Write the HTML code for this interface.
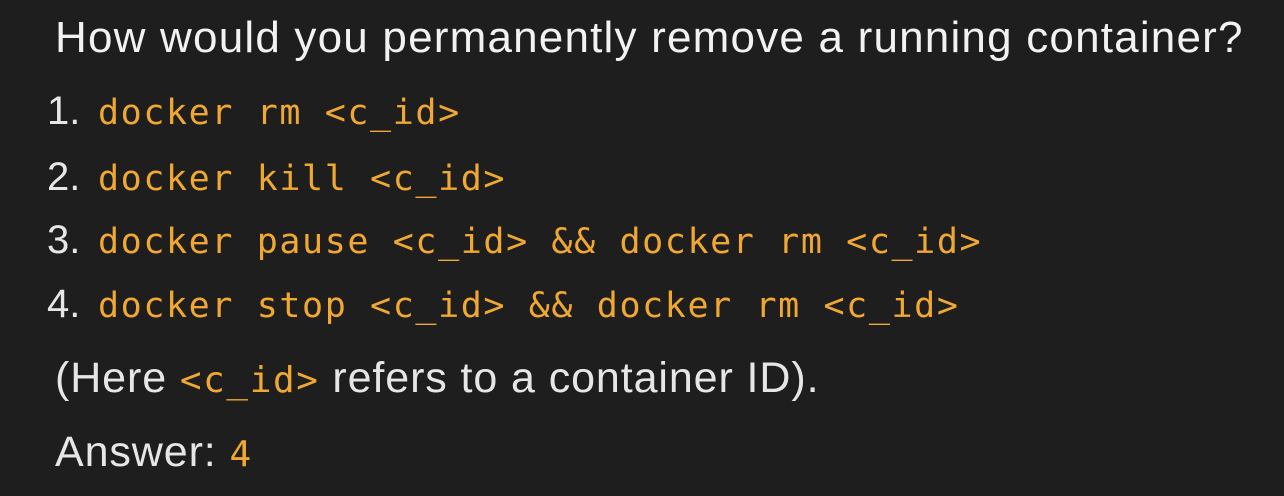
<!DOCTYPE html>
<html><head><style>
html,body{margin:0;padding:0;background:#1e1e1e;width:1284px;height:496px;overflow:hidden}
body{font-family:"Liberation Sans",sans-serif;color:#e6e6e6;position:relative}
.l{position:absolute;white-space:nowrap;line-height:1}
code{font-family:"DejaVu Sans Mono","Liberation Mono",monospace;color:#f0a832;font-size:35px;letter-spacing:1.6px}
.t{font-size:44px;left:55px;top:16px;letter-spacing:1.2px;color:#f2f2f2}
.n{font-size:40px;left:47px}
.c{left:98px}
.p{font-size:43px;left:55px;letter-spacing:0.9px}
.p code{font-size:36px;letter-spacing:1.6px}
</style></head><body>
<div class="l t">How would you permanently remove a running container?</div>
<div class="l n" style="top:91px">1.</div><div class="l c" style="top:96px"><code>docker rm &lt;c_id&gt;</code></div>
<div class="l n" style="top:157px">2.</div><div class="l c" style="top:162px"><code>docker kill &lt;c_id&gt;</code></div>
<div class="l n" style="top:220px">3.</div><div class="l c" style="top:225px"><code>docker pause &lt;c_id&gt; &amp;&amp; docker rm &lt;c_id&gt;</code></div>
<div class="l n" style="top:284px">4.</div><div class="l c" style="top:289px"><code>docker stop &lt;c_id&gt; &amp;&amp; docker rm &lt;c_id&gt;</code></div>
<div class="l p" style="top:357px">(Here <code>&lt;c_id&gt;</code> refers to a container ID).</div>
<div class="l p" style="top:431px">Answer: <code>4</code></div>
</body></html>
